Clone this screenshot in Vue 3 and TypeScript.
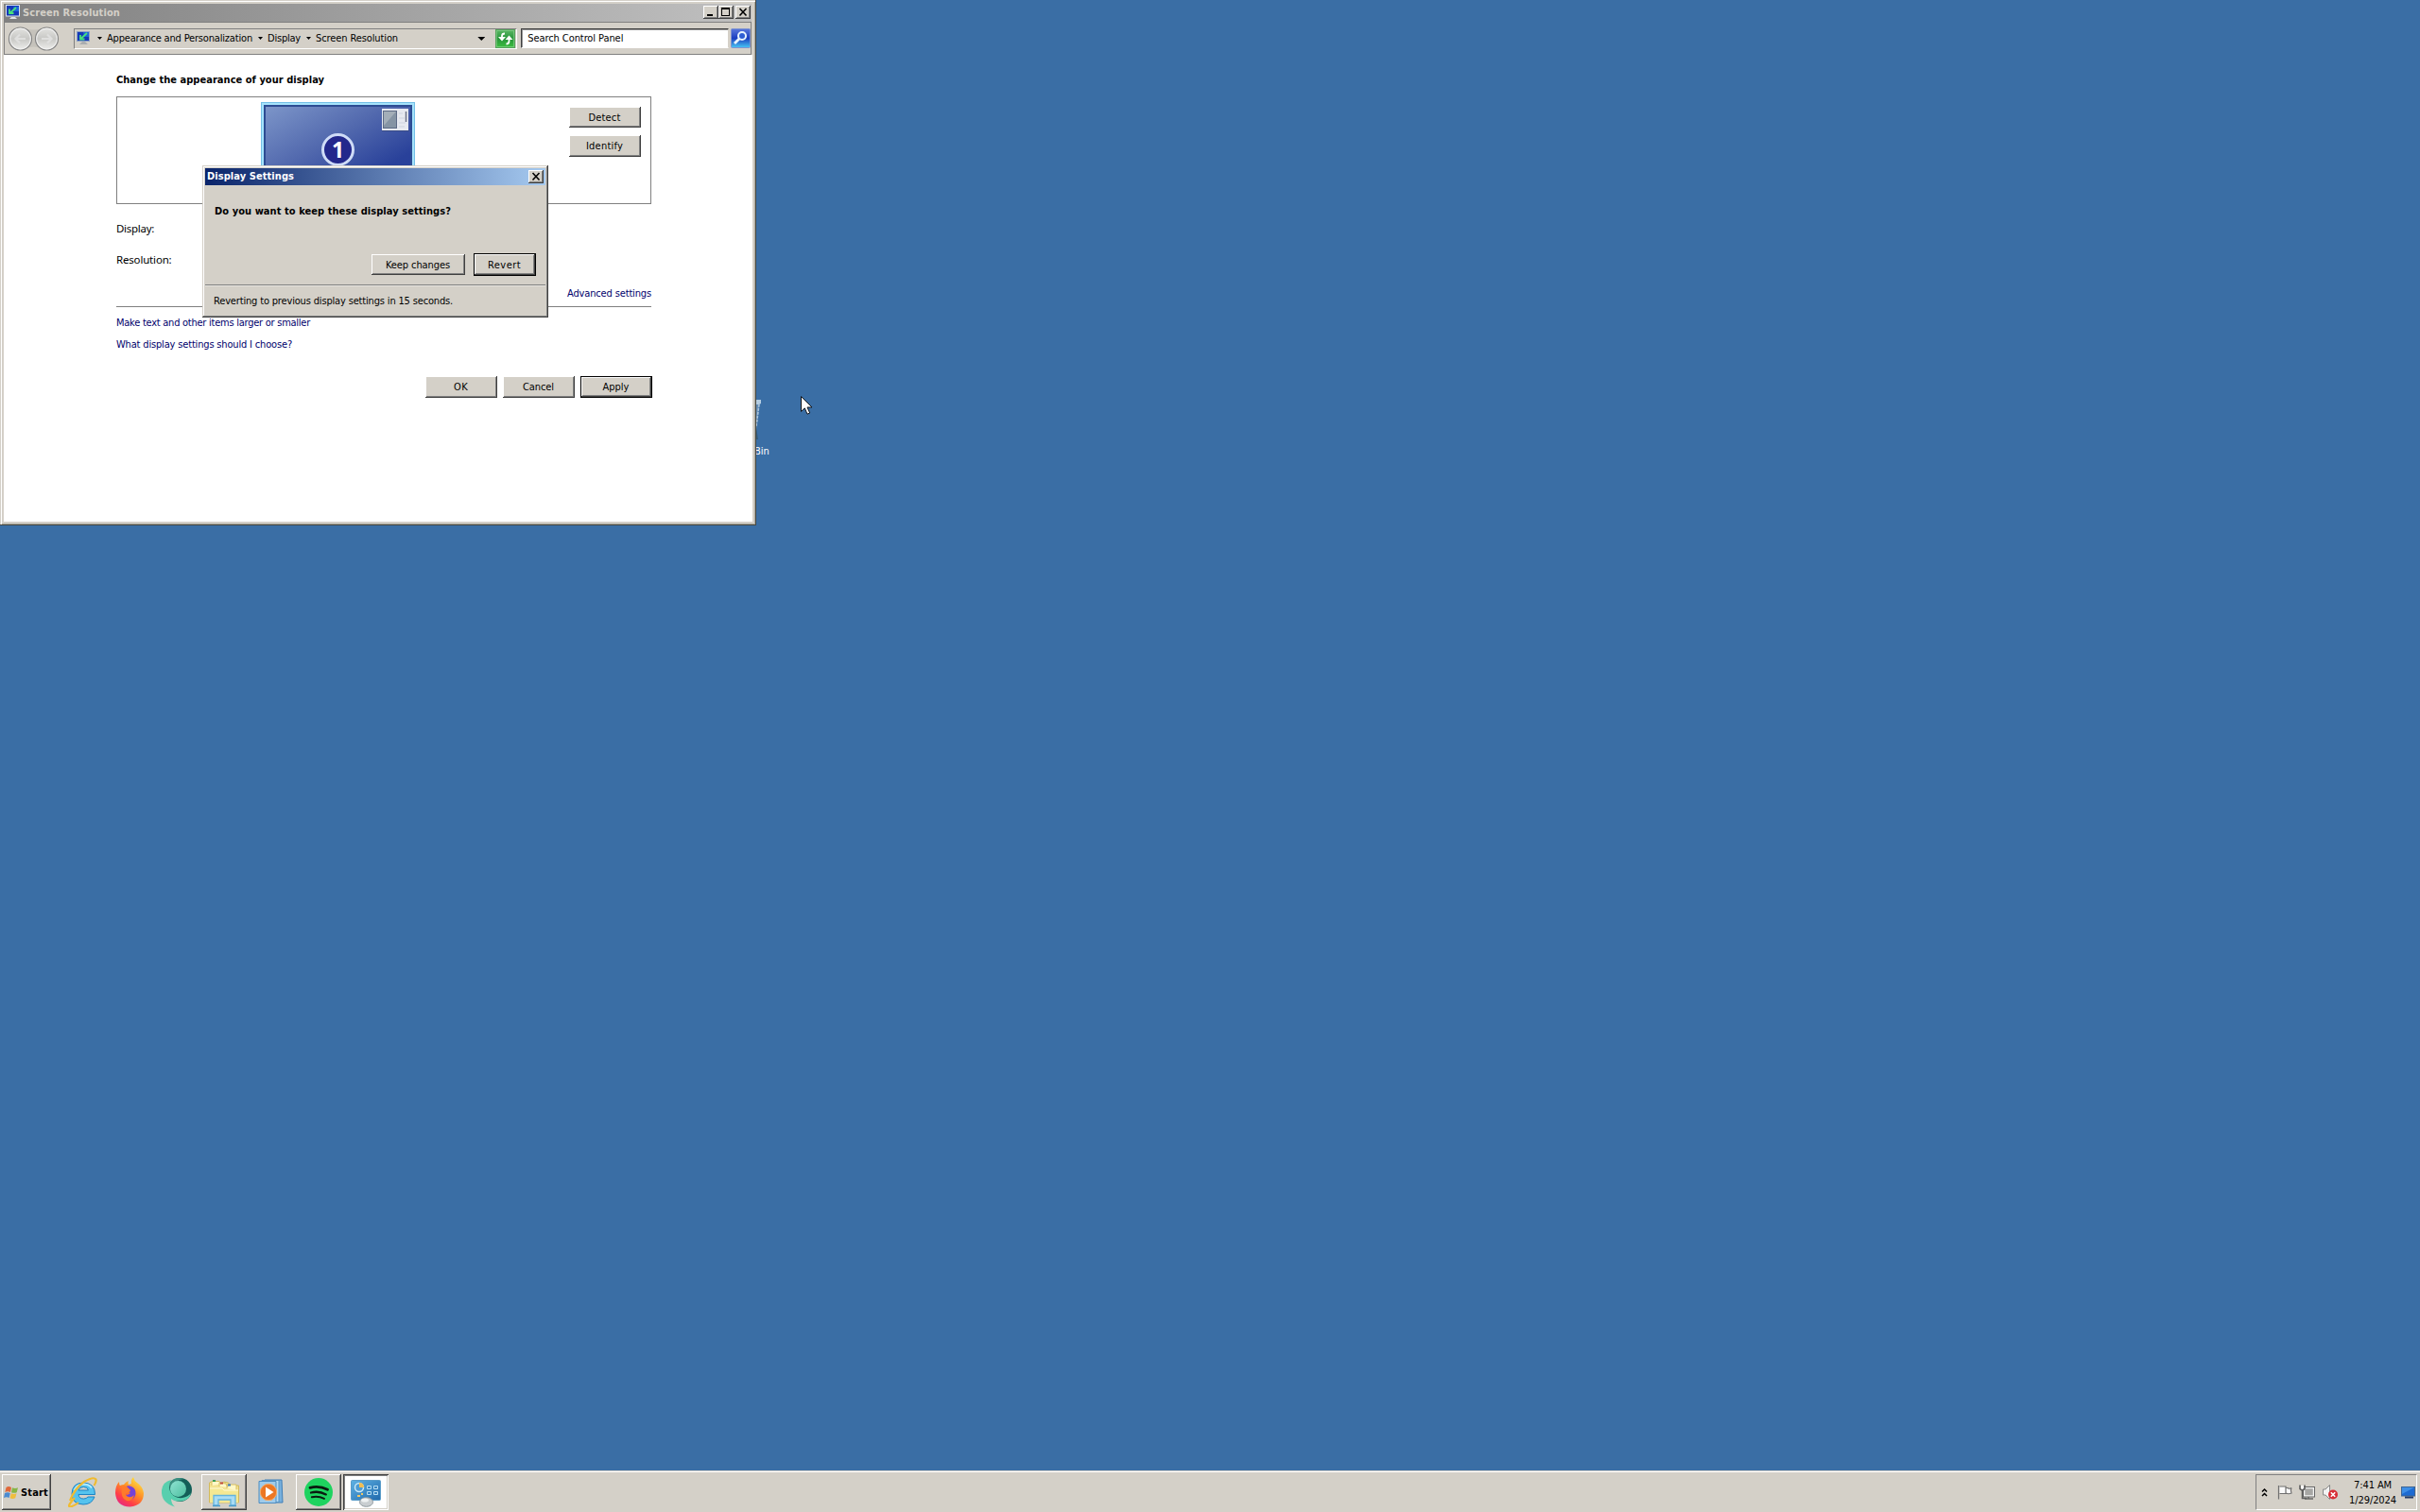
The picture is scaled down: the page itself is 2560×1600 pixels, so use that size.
<script setup lang="ts">
import type { Directive } from 'vue'

/* Tracks a label in or out so that it fills the given advance width. */
const vFit: Directive<HTMLElement, number> = {
  mounted(el, binding) {
    const natural = el.getBoundingClientRect().width
    const count = (el.textContent ?? '').trim().length
    if (natural > 0 && count > 0) {
      el.style.letterSpacing = `${(binding.value - natural) / count}px`
    }
  },
}

interface Crumb {
  label: string
  width: number
}

const crumbs: Crumb[] = [
  { label: 'Appearance and Personalization', width: 154 },
  { label: 'Display', width: 35 },
  { label: 'Screen Resolution', width: 87 },
]
</script>

<template>
  <div class="desktop">
    <div class="recycle">
      <svg class="recycle-icon" width="48" height="48" viewBox="0 0 48 48">
        <path d="M5 3 H42 L37 44 H10Z" fill="#7d9fbe" opacity=".6" />
        <path d="M38 2h5v4l-2 1h-3z" fill="#b4cde2" />
        <path d="M41 7 38 30" stroke="#a9c3da" stroke-width="1.6" stroke-dasharray="3 1" />
        <path d="M38 31 37 44h3z" fill="#355b78" />
      </svg>
      <span v-fit="58" class="recycle-label">Recycle Bin</span>
    </div>

    <section class="window">
      <header class="titlebar inactive">
        <svg class="title-icon" width="16" height="17" viewBox="0 0 16 17">
          <rect x=".5" y=".5" width="14" height="11.500" fill="#1438b8" stroke="#d8e2ee" />
          <path d="M8 2h6v5H9z" fill="#1c66d8" />
          <path d="M11 3 5 8.500M4 4.500v4.500h4.500" fill="none" stroke="#48e07c" stroke-width="1.800" />
          <path d="M4 15h8l-2-2H6z" fill="#dfe3e6" />
        </svg>
        <span v-fit="103" class="title-text">Screen Resolution</span>
        <div class="caption-buttons">
          <span class="cap"><svg width="12" height="10" viewBox="0 0 12 10"><rect x="2" y="7" width="6" height="2" /></svg></span>
          <span class="cap"><svg width="12" height="10" viewBox="0 0 12 10"><path d="M1 0h9v9H1zM2 2v6h7V2z" fill-rule="evenodd" /></svg></span>
          <span class="cap close"><svg width="12" height="10" viewBox="0 0 12 10"><path d="M2.500 1 9.500 8.500M9.500 1 2.500 8.500" stroke="#000" stroke-width="1.600" /></svg></span>
        </div>
      </header>

      <div class="toolbar">
        <svg class="nav" width="56" height="28" viewBox="0 0 56 28">
          <defs>
            <linearGradient id="nav" x1="0" y1="0" x2="0" y2="1">
              <stop offset="0" stop-color="#e4e4e2" />
              <stop offset=".5" stop-color="#c8c8c5" />
              <stop offset="1" stop-color="#efefed" />
            </linearGradient>
          </defs>
          <path d="M13 2Q28 7 42 2V26Q28 19 13 26Z" fill="#c5c2bb" />
          <g fill="url(#nav)" stroke="#858585" stroke-width="1.200">
            <circle cx="13.500" cy="14" r="12" />
            <circle cx="41.500" cy="14" r="12" />
          </g>
          <g fill="none" stroke="#f4f4f4" stroke-width="1.100" opacity=".8">
            <circle cx="13.500" cy="14" r="10.800" />
            <circle cx="41.500" cy="14" r="10.800" />
          </g>
          <g fill="none" stroke="#dfdfde" stroke-width="2.200">
            <path d="M19 14H8M13 9.500 8.500 14l4.500 4.500" />
            <path d="M36 14h11M42 9.500l4.500 4.500-4.500 4.500" />
          </g>
        </svg>

        <div class="address">
          <svg class="addr-icon" width="15" height="16" viewBox="0 0 15 16">
            <rect x=".5" y=".5" width="13" height="10" fill="#1438b8" stroke="#8ea4c4" />
            <path d="M7 1h6v5H8z" fill="#1c66d8" />
            <path d="M11 2 5 7.500M4 4v4.500h4.500" fill="none" stroke="#48e07c" stroke-width="1.800" />
            <path d="M3 14h9l-3-3H6z" fill="#a9adb0" />
          </svg>
          <template v-for="crumb in crumbs" :key="crumb.label">
            <i class="tri" />
            <span v-fit="crumb.width" class="crumb">{{ crumb.label }}</span>
          </template>
          <i class="tri drop" />
          <svg class="refresh" width="21" height="20" viewBox="0 0 21 20">
            <defs>
              <linearGradient id="green" x1="0" y1="0" x2="0" y2="1">
                <stop offset="0" stop-color="#5cb765" />
                <stop offset=".5" stop-color="#27953a" />
                <stop offset="1" stop-color="#3cc040" />
              </linearGradient>
            </defs>
            <rect x=".5" y=".5" width="20" height="19" fill="url(#green)" stroke="#54a35a" />
            <rect x="1.500" y="1.500" width="18" height="17" fill="none" stroke="#8fd494" opacity=".6" />
            <path d="M10 4.500Q7 4.500 7 7v2M11.500 15.500q3 0 3-3v-2" fill="none" stroke="#fff" stroke-width="1.800" />
            <path d="M3 8h8l-4 4.500zM10.500 11h8l-4-4.500z" fill="#fff" />
          </svg>
        </div>

        <div class="search"><span v-fit="101">Search Control Panel</span></div>
        <svg class="search-go" width="21" height="21" viewBox="0 0 21 21">
          <defs>
            <linearGradient id="blue" x1="0" y1="0" x2="0" y2="1">
              <stop offset="0" stop-color="#5a78dc" />
              <stop offset=".5" stop-color="#1b3fc0" />
              <stop offset="1" stop-color="#49c8f4" />
            </linearGradient>
          </defs>
          <rect x=".5" y=".5" width="20" height="20" rx="1" fill="url(#blue)" stroke="#8094d0" />
          <circle cx="12" cy="8" r="4" fill="#2f5fd4" stroke="#e8f4ff" stroke-width="2" />
          <path d="M9 11 4 16" stroke="#e8f4ff" stroke-width="2.800" />
        </svg>
      </div>

      <main class="content">
        <h1><span v-fit="220">Change the appearance of your display</span></h1>

        <div class="preview">
          <div class="monitor">
            <svg class="mini" width="29" height="24" viewBox="0 0 29 24">
              <rect width="28" height="23" fill="#e6e9f0" />
              <rect x="1.500" y="2.500" width="14" height="18" fill="#8594a4" stroke="#5d6b86" />
              <path d="M2 3h13L2 18z" fill="#a3aeb8" />
              <path d="M18 5h4M18 10h6M18 15h7M18 19h6" stroke="#cdd3df" />
              <path d="M25.500 3v11" stroke="#6e7488" stroke-width="1.500" />
              <path d="M0 23.500h29" stroke="#3a4c86" />
            </svg>
            <div class="number">1</div>
          </div>
          <div class="preview-buttons">
            <button class="btn"><span v-fit="34">Detect</span></button>
            <button class="btn"><span v-fit="39">Identify</span></button>
          </div>
        </div>

        <p class="field display-row"><span v-fit="40">Display:</span></p>
        <p class="field resolution-row"><span v-fit="58.5">Resolution:</span></p>
        <p class="advanced"><a v-fit="89">Advanced settings</a></p>
        <div class="rule" />
        <p class="link first"><a v-fit="205">Make text and other items larger or smaller</a></p>
        <p class="link"><a v-fit="186">What display settings should I choose?</a></p>

        <div class="actions">
          <button class="btn"><span v-fit="15">OK</span></button>
          <button class="btn"><span v-fit="33">Cancel</span></button>
          <button class="btn default"><span v-fit="28">Apply</span></button>
        </div>
      </main>
    </section>

    <section class="dialog">
      <header class="titlebar active">
        <span v-fit="92" class="title-text">Display Settings</span>
        <div class="caption-buttons">
          <span class="cap close"><svg width="12" height="10" viewBox="0 0 12 10"><path d="M2.500 1 9.500 8.500M9.500 1 2.500 8.500" stroke="#000" stroke-width="1.600" /></svg></span>
        </div>
      </header>
      <h2><span v-fit="250">Do you want to keep these display settings?</span></h2>
      <div class="dialog-actions">
        <button class="btn keep"><span v-fit="68">Keep changes</span></button>
        <button class="btn default revert"><span v-fit="35">Revert</span></button>
      </div>
      <p class="countdown"><span v-fit="253">Reverting to previous display settings in 15 seconds.</span></p>
    </section>

    <svg class="cursor" width="14" height="22" viewBox="0 0 14 22">
      <path d="M.5.5V16.500L4.300 12.900 7 19.200 9.700 18 7 12H12Z" fill="#fff" stroke="#10151c" />
    </svg>

    <footer class="taskbar">
      <button class="start">
        <svg width="16" height="15" viewBox="0 0 16 15">
          <path d="M2.500 2Q5 .2 8 2L7 7Q4 5.500 1.300 7Z" fill="#e0683a" />
          <path d="M9 2.300q3 1.400 6 0L13.700 7.200Q11 8.500 8 7.200Z" fill="#86b545" />
          <path d="M1 8q3-1.500 5.800 0L5.600 13Q3 11.500 0 13Z" fill="#4c8bd0" />
          <path d="M7.800 8.300q3 1.400 5.700 0L12.200 13.200q-3 1.400-5.600 0Z" fill="#efbd3e" />
        </svg>
        <span v-fit="29">Start</span>
      </button>

      <div class="tasks">
        <div class="task">
          <svg width="32" height="32" viewBox="0 0 32 32">
            <path d="M29.500 18.500H12q.5 4.500 5.500 4.500 3 0 4.500-2h7Q26 29 17 29 5 28.500 5 17.500 5.500 6 17.500 6q12 .5 12 12.500ZM12 14h10.500q-.8-3.500-5.100-3.500-4.500 0-5.400 3.500Z" fill="#55c3ee" stroke="#1c83c4" fill-rule="evenodd" />
            <path d="M7.500 14q3-6.500 10.500-6.500 5.300.3 8 4" fill="none" stroke="#b5ebfb" stroke-width="2" />
            <path d="M8 22Q0 30.500 2.800 31.500 7 31 12 27M3 25Q8 12 18 5 28-1 30.500 2.500 31.200 5 28.500 9" fill="none" stroke="#f0bb30" stroke-width="2.200" />
          </svg>
        </div>
        <div class="task">
          <svg width="32" height="32" viewBox="0 0 32 32">
            <defs>
              <linearGradient id="fox" x1=".85" y1="0" x2=".2" y2="1">
                <stop offset="0" stop-color="#fff04a" />
                <stop offset=".45" stop-color="#ff8e25" />
                <stop offset=".75" stop-color="#ff3e47" />
                <stop offset="1" stop-color="#e0258c" />
              </linearGradient>
            </defs>
            <path d="M5 5q0 3 1 4 2-1 4-1 2-3 5-4-1 2 0 4l3-1Q17 3 20 0q1 4 4 6 6 4 7 11 0 13-14.500 14.500Q2 31 1 17 1 9 5 5Z" fill="url(#fox)" />
            <path d="M11 11q3-3 7-1 5 2 4.500 8-1 6-7 5.500-5-.5-5.500-5l4 .5 3-2-4-1.500q-3-1-2-4.500Z" fill="#7542d8" />
            <path d="M8 10q2-1.500 5 0l4 4q-1 3-4 3-2 1 0 3 4 3 8-1-2 7-8 6-7-2-5-15Z" fill="#ff7a2b" />
          </svg>
        </div>
        <div class="task">
          <svg width="34" height="34" viewBox="0 0 34 34">
            <defs>
              <linearGradient id="teal" x1="0" y1="0" x2="1" y2="1">
                <stop offset="0" stop-color="#8fe3d2" />
                <stop offset="1" stop-color="#4dbf9f" />
              </linearGradient>
            </defs>
            <circle cx="20.500" cy="14.500" r="12.500" fill="#135f58" />
            <path d="M9 7Q15-.5 25 3 13 4 10 17Z" fill="#3a8f80" />
            <circle cx="18.500" cy="13.500" r="8.500" fill="url(#teal)" />
            <path d="M1 15Q2 6 11 4 7 12 11 18q4 6 12 5 6-1 9-5-2 8-11 8.500-7 .5-10-2.500 0 5 4 8.500Q0 28 1 15Z" fill="#58cfae" />
          </svg>
        </div>
        <div class="task raised">
          <svg width="34" height="32" viewBox="0 0 34 32">
            <path d="M1.500 9V6l2-1h8l2 3 3-3 5 1 2 3h9v18h-31Z" fill="#f3e391" stroke="#d2b95c" />
            <path d="M4 9V4.500h8l1 3M12 10V6l7 1 2 4M20 12V8h10v6" fill="#fff8c9" stroke="#d7bf63" />
            <path d="M2 12h13l2 2h15v13H2Z" fill="#f5e892" />
            <path d="M2 12h13l2 2h15" fill="none" stroke="#fffbd8" />
            <path d="M5 4h3" stroke="#3e9d54" stroke-width="2" /><path d="M13 6.500h3" stroke="#c1493a" stroke-width="2" /><path d="M21 8.500h3" stroke="#3a7ac0" stroke-width="2" />
            <path d="M6 30V19.500h23V30h-5v-6H11v6Z" fill="#a9dcf4" stroke="#63b4df" stroke-width="1.300" />
            <path d="M5 30.500h8M22 30.500h8" stroke="#4a9ccb" stroke-width="1.500" />
          </svg>
        </div>
        <div class="task">
          <svg width="30" height="30" viewBox="0 0 30 30">
            <path d="M8 2h18l1 24H9Z" fill="#78b0dc" stroke="#3f7fb8" />
            <path d="M5 2.500h18v23H5z" fill="#b7dbf2" stroke="#5694c6" />
            <path d="M2 3.500h18v23H2z" fill="#9fcbea" stroke="#4d8dc2" />
            <circle cx="12" cy="15" r="8.700" fill="#ec7724" stroke="#f7ad68" />
            <path d="M9 9.500v11L17.500 15z" fill="#fff" />
          </svg>
        </div>
        <div class="task raised">
          <svg width="32" height="32" viewBox="0 0 32 32">
            <circle cx="16" cy="16" r="15" fill="#1ed35f" />
            <g fill="none" stroke="#0a1a10" stroke-linecap="round">
              <path d="M7 11.300q9.500-2.700 18.500 2" stroke-width="2.800" />
              <path d="M8 16.500q8.500-2.200 15.800 1.900" stroke-width="2.300" />
              <path d="M8.800 21.200q7-1.600 13.200 1.700" stroke-width="1.900" />
            </g>
          </svg>
        </div>
        <div class="task pressed">
          <svg width="34" height="32" viewBox="0 0 34 32">
            <defs>
              <linearGradient id="panel" x1="0" y1="0" x2="1" y2="1">
                <stop offset="0" stop-color="#5fb2e4" />
                <stop offset="1" stop-color="#2069ac" />
              </linearGradient>
            </defs>
            <rect x="1.500" y="3.500" width="31" height="21" rx="1" fill="url(#panel)" stroke="#5a9cc9" />
            <circle cx="10" cy="11" r="4.500" fill="#4d9bd3" stroke="#c9e8f8" stroke-width="1.500" />
            <path d="M10 11V6q5 0 5 5Z" fill="#f1bd52" />
            <path d="M18.500 9.500h4v3h-4zM25.500 9.500h4v3h-4zM18.500 15.500h4v3h-4zM25.500 15.500h4v3h-4z" fill="#3786c4" stroke="#b5dcf2" />
            <path d="M8 20h3M12 18h2" stroke="#f0c867" stroke-width="2" />
            <ellipse cx="17.500" cy="26.500" rx="7" ry="4.800" fill="#c9ced1" stroke="#8f999f" />
            <ellipse cx="16" cy="24.500" rx="4" ry="2" fill="#eef1f2" />
          </svg>
        </div>
      </div>

      <div class="tray">
        <svg class="chevrons" width="8" height="10" viewBox="0 0 8 10">
          <path d="M1 4.500 3.500 2 6 4.500M1 9 3.500 6.500 6 9" fill="none" stroke="#000" stroke-width="1.500" />
        </svg>
        <svg class="flag" width="18" height="18" viewBox="0 0 18 18">
          <path d="M2.500 2v14.500M3.500 3h6.500v7.500H3.500M10 4.500h2q2 1.500 4 0-1.500 3 0 5.500-3 1.500-6 0" fill="#fafafa" stroke="#6f6f6f" stroke-width="1.200" />
        </svg>
        <svg class="net" width="18" height="18" viewBox="0 0 18 18">
          <rect x="5.500" y="4.500" width="10" height="8.500" fill="#a6a6a4" stroke="#f4f4f4" stroke-width="1.500" />
          <rect x="4.500" y="3.500" width="12" height="10.500" fill="none" stroke="#666" />
          <path d="M6 16h9M10 14v2" stroke="#666" stroke-width="1.500" />
          <path d="M1 1.500v4l2 1.500h1l2-1.500v-4M3.500 6v9.500H8" fill="none" stroke="#5e5e5e" stroke-width="1.600" />
          <path d="M2 2v3l1.500 1L5 5V2" fill="#fff" />
        </svg>
        <svg class="vol" width="18" height="18" viewBox="0 0 18 18">
          <path d="M1.500 6v6H4l4.500 4.500v-15L4 6Z" fill="#f3f3f3" stroke="#888" />
          <circle cx="12" cy="11.500" r="5" fill="#d72f37" />
          <path d="m9.800 9.300 4.400 4.400m0-4.400-4.400 4.400" stroke="#fff" stroke-width="1.600" />
        </svg>
        <div class="clock"><span v-fit="40">7:41 AM</span><span v-fit="50">1/29/2024</span></div>
        <svg class="peek" width="16" height="13" viewBox="0 0 16 13">
          <rect x=".5" y=".5" width="14" height="9.500" fill="#1d6bd2" stroke="#3c6494" />
          <path d="M1 1h13L1 8z" fill="#3e8fe6" />
          <path d="M4 11.500h9" stroke="#223a66" stroke-width="2" />
        </svg>
      </div>
    </footer>
  </div>
</template>

<style>
body {
  margin: 0;
  overflow: hidden;
}
</style>

<style scoped>
.desktop {
  position: relative;
  display: flex;
  flex-direction: column;
  justify-content: flex-end;
  width: 2560px;
  height: 1600px;
  overflow: hidden;
  background: #3a6ea5;
  color: #000;
  font-family: "DejaVu Sans Condensed", "DejaVu Sans", sans-serif;
  font-stretch: condensed;
  font-size: 11px;
  line-height: 16px;
}

.desktop * {
  box-sizing: border-box;
}

span,
a {
  white-space: nowrap;
}

svg {
  display: block;
  flex: none;
}

h1,
h2,
p {
  margin: 0;
  font-size: 11px;
}

h1 span,
h2 span,
p span,
p a,
button span,
.search span {
  display: inline-block;
}

/* Desktop item partly hidden by the window */
.recycle {
  position: absolute;
  left: 756px;
  top: 421px;
  display: flex;
  flex-direction: column;
  width: 60px;
}

.recycle-icon {
  margin-left: 6px;
}

.recycle-label {
  align-self: flex-start;
  margin-top: 1px;
  color: #fff;
}

/* Windows */
.window {
  position: absolute;
  left: 0;
  top: 0;
  display: flex;
  flex-direction: column;
  width: 800px;
  height: 556px;
  padding: 4px;
  background: #d4d0c8;
  box-shadow: inset -1px -1px #484840, inset 1px 1px #d4d0c8, inset 2px 2px #fff, inset -2px -2px #a8a69c;
}

.titlebar {
  display: flex;
  align-items: center;
  flex: none;
  height: 19px;
  font-weight: bold;
}

.inactive {
  margin-right: 1px;
  padding: 0 1px 1px 2px;
  background: linear-gradient(90deg, #808080, #c0c0c0);
  color: #d4d0c8;
}

.inactive .title-text {
  margin: 1px 0 0 2px;
}

.active {
  height: 18px;
  padding: 0 2px 0 2px;
  background: linear-gradient(90deg, #0a246a, #a6caf0);
  color: #fff;
}

.caption-buttons {
  display: flex;
  margin-left: auto;
}

.cap {
  display: flex;
  align-items: center;
  justify-content: center;
  width: 16px;
  height: 14px;
  background: #d4d0c8;
  box-shadow: inset -1px -1px #404040, inset 1px 1px #fff, inset -2px -2px #808080;
}

.inactive .close {
  margin-left: 2px;
}

.toolbar {
  display: flex;
  align-items: flex-start;
  flex: none;
  height: 35px;
  margin-right: 1px;
  padding: 6px 0 0 3px;
  border: 1px solid #808080;
  background: #d4d0c8;
}

.nav {
  margin-top: -3px;
}

.address {
  display: flex;
  align-items: center;
  width: 470px;
  height: 22px;
  margin-left: 14px;
  padding: 0 1px 1px 2px;
  border: 1px solid;
  border-color: #808080 #fff #fff #808080;
}

.tri {
  width: 5px;
  height: 3px;
  margin: 0 5px 0 6px;
  background: #000;
  clip-path: polygon(0 0, 100% 0, 50% 100%);
}

.addr-icon + .tri {
  margin-left: 7px;
}

.drop {
  width: 8px;
  height: 4px;
  margin: 1px 0 0 auto;
}

.refresh {
  margin: 1px 0 0 11px;
}

.search {
  width: 220px;
  height: 21px;
  margin-left: 4px;
  padding: 2px 0 0 6px;
  border: 1px solid;
  border-color: #404040 #d4d0c8 #fff #404040;
  box-shadow: inset 1px 1px #909090;
  background: #fff;
}

.search-go {
  margin-left: 2px;
}

.content {
  flex: 1;
  padding: 17px 0 0 119px;
  background: #fff;
}

h1 {
  line-height: 20px;
}

.preview {
  display: flex;
  justify-content: space-between;
  width: 566px;
  height: 114px;
  margin-top: 7px;
  padding: 5px 10px 0 152px;
  border: 1px solid #808080;
}

.monitor {
  display: flex;
  flex-direction: column;
  align-items: center;
  width: 163px;
  height: 100px;
  padding-top: 2px;
  border: 1px solid #74bfe6;
  box-shadow: inset 0 0 0 2px #a5e3fb, inset 0 0 0 4px #2d4c93;
  background: linear-gradient(150deg, #8099cb 0%, #5269ae 42%, #29419a 75%, #27409b 100%);
}

.mini {
  align-self: flex-end;
  margin: 4px 5px 0 0;
}

.number {
  width: 35px;
  height: 35px;
  margin-top: 2px;
  border: 3px solid #cfdcf7;
  border-radius: 50%;
  background: #23288c;
  color: #fff;
  font: bold 23px/29px "Noto Sans", sans-serif;
  text-align: center;
}

.btn {
  display: flex;
  align-items: center;
  justify-content: center;
  width: 76px;
  height: 23px;
  padding: 1px 1px 0 0;
  border: 0;
  background: #d4d0c8;
  box-shadow: inset -1px -1px #404040, inset 1px 1px #fff, inset -2px -2px #808080;
  color: #000;
  font: inherit;
}

.btn.default {
  border: 1px solid #000;
  padding: 1px 1px 0 0;
}

.preview-buttons {
  display: flex;
  flex-direction: column;
  gap: 8px;
  margin-top: 5px;
}

.preview-buttons .btn {
  height: 22px;
}

.preview-buttons .btn + .btn {
  height: 23px;
}

.field {
  font-family: "Noto Sans", sans-serif;
  font-size: 11.500px;
}

.display-row {
  margin-top: 18px;
}

.resolution-row {
  margin-top: 17px;
}

.advanced {
  width: 566px;
  margin-top: 20px;
  text-align: right;
}

.advanced,
.link {
  color: #00006c;
}

.rule {
  width: 566px;
  height: 1px;
  margin-top: 5px;
  background: #808080;
}

.link {
  margin-top: 7px;
}

.link.first {
  margin-top: 9px;
}

.actions {
  display: flex;
  gap: 6px;
  margin: 25px 0 0 327px;
}

.dialog {
  position: absolute;
  left: 214px;
  top: 175px;
  display: flex;
  flex-direction: column;
  width: 366px;
  height: 161px;
  padding: 3px;
  background: #d4d0c8;
  box-shadow: inset -1px -1px #404040, inset 1px 1px #d4d0c8, inset -2px -2px #808080, inset 2px 2px #fff;
}

.dialog h2 {
  margin: 20px 0 0 10px;
}

.dialog-actions {
  display: flex;
  align-items: center;
  justify-content: flex-end;
  gap: 9px;
  height: 24px;
  margin: 36px 10px 0 0;
}

.keep {
  width: 99px;
  height: 22px;
}

.revert {
  width: 66px;
  height: 24px;
}

.countdown {
  margin-top: 9px;
  padding: 9px 0 0 9px;
  border-top: 1px solid #808080;
  box-shadow: inset 0 1px #e8e5df;
}

.cursor {
  position: absolute;
  left: 847px;
  top: 419px;
}

/* Taskbar */
.taskbar {
  display: flex;
  align-items: flex-start;
  height: 44px;
  padding: 4px 3px 0 2px;
  background: #d4d0c8;
  box-shadow: inset 0 1px #d4d0c8, inset 0 2px #fff;
}

.start {
  display: flex;
  align-items: center;
  gap: 2px;
  width: 52px;
  height: 38px;
  padding: 1px 0 0 2px;
  border: 0;
  background: #d4d0c8;
  box-shadow: inset -1px -1px #404040, inset 1px 1px #fff, inset -2px -2px #808080;
  color: #000;
  font: inherit;
  font-weight: bold;
}

.tasks {
  display: flex;
  gap: 2px;
  margin-left: 9px;
}

.task {
  display: flex;
  align-items: center;
  justify-content: center;
  width: 48px;
  height: 38px;
}

.task.raised {
  box-shadow: inset -1px -1px #404040, inset 1px 1px #fff, inset -2px -2px #808080;
}

.task.pressed {
  background: #fff;
  box-shadow: inset 1px 1px #404040, inset -1px -1px #fff, inset 2px 2px #808080, inset -2px -2px #d4d0c8;
}

.tray {
  display: flex;
  align-items: center;
  width: 171px;
  height: 38px;
  margin-left: auto;
  padding-left: 5px;
  border: 1px solid;
  border-color: #808080 #fff #fff #808080;
}

.flag {
  margin-left: 8px;
}

.net {
  margin-left: 6px;
}

.vol {
  margin-left: 6px;
}

.clock {
  display: flex;
  flex-direction: column;
  align-items: center;
  width: 50px;
  margin: 1px 0 0 11px;
}

.peek {
  margin-left: 5px;
}
</style>
